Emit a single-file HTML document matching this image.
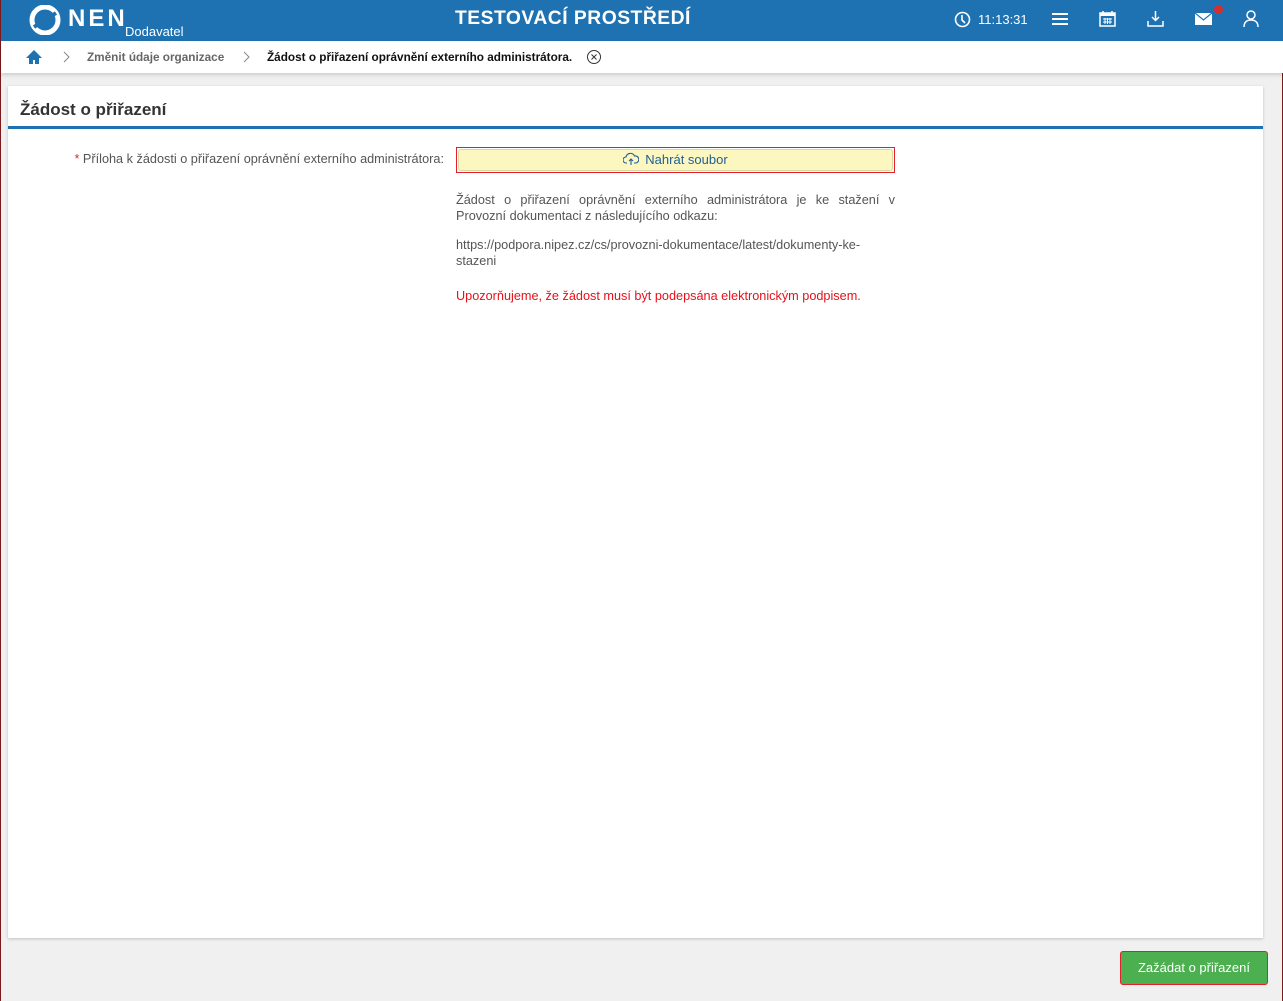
<!DOCTYPE html>
<html><head><meta charset="utf-8"><style>
*{box-sizing:border-box;margin:0;padding:0}
body{width:1283px;height:1001px;overflow:hidden;background:#f0f0f0;font-family:"Liberation Sans",sans-serif;position:relative;border-left:1px solid #7a1a1a;border-right:1px solid #7a1a1a}
.hdr{position:absolute;left:0;top:0;width:1283px;height:41px;background:#1f72b2;color:#fff}
.bc{position:absolute;left:0;top:41px;width:1283px;height:32px;background:#fff;box-shadow:0 2px 4px rgba(0,0,0,.15);font-size:12px}
.card{position:absolute;left:7px;top:86px;width:1255px;height:852px;background:#fff;box-shadow:0 1px 3px rgba(0,0,0,.2)}
.t{position:absolute;font-size:12.7px;color:#555;white-space:nowrap}
</style></head><body>
<div class="hdr">
<svg style="position:absolute;left:27px;top:5px" width="34" height="30" viewBox="0 0 34 30"><circle cx="17" cy="15" r="13" fill="none" stroke="#fff" stroke-width="5"/><path d="M6 22 L28 8" stroke="#1f72b2" stroke-width="4"/></svg>
<div style="position:absolute;left:67px;top:5px;font-size:24px;font-weight:bold;letter-spacing:3px">NEN</div>
<div style="position:absolute;left:124px;top:24px;font-size:13px">Dodavatel</div>
<div style="position:absolute;left:454px;top:8px;font-size:19.3px;font-weight:bold;letter-spacing:.5px">TESTOVACÍ PROSTŘEDÍ</div>
<svg style="position:absolute;left:953px;top:11px" width="17" height="17" viewBox="0 0 17 17"><circle cx="8.5" cy="8.5" r="7" fill="none" stroke="#fff" stroke-width="1.6"/><path d="M8 4v5l3 3" fill="none" stroke="#fff" stroke-width="1.6"/></svg>
<div style="position:absolute;left:977px;top:12px;font-size:13px">11:13:31</div>
<svg style="position:absolute;left:1051px;top:12px" width="16" height="14"><path d="M0 2h16M0 7h16M0 12h16" stroke="#fff" stroke-width="2"/></svg>
<svg style="position:absolute;left:1098px;top:10px" width="17" height="17"><rect x="1" y="3" width="15" height="13" fill="none" stroke="#fff" stroke-width="1.5"/><rect x="1" y="3" width="15" height="3" fill="#fff"/><path d="M4 1v4M13 1v4" stroke="#fff" stroke-width="1.5"/><path d="M4 9h9M4 12h9M6 8v6M8.5 8v6M11 8v6" stroke="#fff"/></svg>
<svg style="position:absolute;left:1146px;top:10px" width="17" height="17"><path d="M8.5 1v9M5 7l3.5 3.5L12 7M1 11v5h15v-5" fill="none" stroke="#fff" stroke-width="1.5"/></svg>
<svg style="position:absolute;left:1194px;top:13px" width="17" height="12"><rect x="0" y="0" width="17" height="12" fill="#fff"/><path d="M0 0l8.5 7L17 0" fill="none" stroke="#1f72b2" stroke-width="1.2"/></svg>
<div style="position:absolute;left:1213px;top:5px;width:9px;height:9px;border-radius:50%;background:#d32f2f"></div>
<svg style="position:absolute;left:1242px;top:10px" width="16" height="18"><circle cx="8" cy="5" r="4" fill="none" stroke="#fff" stroke-width="1.5"/><path d="M1 17c0-5 3-7 7-7s7 2 7 7" fill="none" stroke="#fff" stroke-width="1.5"/></svg>
</div>
<div class="bc">
<svg style="position:absolute;left:24px;top:8px" width="18" height="16"><path d="M9 1L1 9h3v6h4v-4h2v4h4V9h3z" fill="#1f72b2"/></svg>
<svg style="position:absolute;left:62px;top:10px" width="8" height="12"><path d="M1 1l5 5-5 5" fill="none" stroke="#888"/></svg>
<div style="position:absolute;left:86px;top:9px;color:#666;font-weight:bold;white-space:nowrap;transform:scaleX(.98);transform-origin:0 0">Změnit údaje organizace</div>
<svg style="position:absolute;left:242px;top:10px" width="8" height="12"><path d="M1 1l5 5-5 5" fill="none" stroke="#888"/></svg>
<div style="position:absolute;left:266px;top:9px;color:#111;font-weight:bold;white-space:nowrap;transform:scaleX(.98);transform-origin:0 0">Žádost o přiřazení oprávnění externího administrátora.</div>
<svg style="position:absolute;left:585px;top:8px" width="16" height="16"><circle cx="8" cy="8" r="6.5" fill="none" stroke="#333"/><path d="M5.5 5.5l5 5M10.5 5.5l-5 5" stroke="#333"/></svg>
</div>
<div class="card">
<div style="position:absolute;left:12px;top:14px;font-size:17px;font-weight:bold;color:#333">Žádost o přiřazení</div>
<div style="position:absolute;left:0;top:40px;width:1255px;height:3px;background:#1f72b2"></div>
</div>
<div class="t" style="right:838px;top:152px"><span style="color:#d32f2f">* </span>Příloha k žádosti o přiřazení oprávnění externího administrátora:</div>
<div style="position:absolute;left:455px;top:147px;width:439px;height:26px;border:1px solid #e0202a;padding:1px"><div style="width:100%;height:100%;background:#fcf6c0;border:1px solid #ddd6a0;border-radius:3px;text-align:center;font-size:13px;color:#1f5f96;line-height:20px">
<svg width="16" height="14" style="vertical-align:-2px;margin-right:6px"><path d="M4 11H3a3 3 0 0 1 0-6 4.5 4.5 0 0 1 8.5-1 3 3 0 0 1 1.5 7h-2" fill="none" stroke="#1f5f96" stroke-width="1.1"/><path d="M8 13V7M6 9l2-2 2 2" fill="none" stroke="#1f5f96" stroke-width="1.1"/></svg>Nahrát soubor</div></div>
<div style="position:absolute;left:455px;top:192px;width:439px;font-size:12.7px;line-height:16px;color:#555;text-align:justify">Žádost o přiřazení oprávnění externího administrátora je ke stažení v Provozní dokumentaci z následujícího odkazu:</div>
<div style="position:absolute;left:455px;top:237px;width:439px;font-size:12.7px;line-height:16px;color:#555">https://podpora.nipez.cz/cs/provozni-dokumentace/latest/dokumenty-ke-<br>stazeni</div>
<div class="t" style="left:455px;top:289px;color:#e8101a">Upozorňujeme, že žádost musí být podepsána elektronickým podpisem.</div>
<div style="position:absolute;left:1119px;top:951px;width:148px;height:34px;border:1px solid #e0202a;background:#4caf50;border-radius:3px;color:#fff;font-size:13px;text-align:center;line-height:31px">Zažádat o přiřazení</div>
</body></html>
